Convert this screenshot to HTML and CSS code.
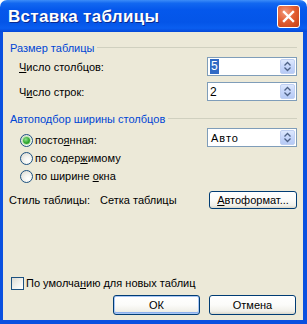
FILE: index.html
```html
<!DOCTYPE html>
<html lang="ru">
<head>
<meta charset="utf-8">
<title>Вставка таблицы</title>
<link rel="stylesheet" href="styles.css">
</head>
<body>
<div class="window">
  <div class="titlebar">
    <span class="title">Вставка таблицы</span>
    <span class="close">
      <svg width="13" height="13" viewBox="0 0 13 13"><path d="M2 2 L11 11 M11 2 L2 11" stroke="#fff" stroke-width="2.4" stroke-linecap="square"/></svg>
    </span>
  </div>
  <div class="frame">
    <div class="group-head"><span class="group-title">Размер таблицы</span><i class="rule"></i></div>
    <div class="field-row">
      <span class="lbl"><u>Ч</u>исло столбцов:</span>
      <div class="spin"><span class="val"><span class="sel">5</span></span><span class="spin-btn"><svg width="9" height="11" viewBox="0 0 9 11"><path d="M1.5 4.5 L4.5 1.5 L7.5 4.5 M1.5 6.5 L4.5 9.5 L7.5 6.5" fill="none" stroke="#4d6185" stroke-width="1.3"/></svg></span></div>
    </div>
    <div class="field-row second">
      <span class="lbl">Ч<u>и</u>сло строк:</span>
      <div class="spin"><span class="val">2</span><span class="spin-btn"><svg width="9" height="11" viewBox="0 0 9 11"><path d="M1.5 4.5 L4.5 1.5 L7.5 4.5 M1.5 6.5 L4.5 9.5 L7.5 6.5" fill="none" stroke="#4d6185" stroke-width="1.3"/></svg></span></div>
    </div>
    <div class="group-head head2"><span class="group-title">Автоподбор ширины столбцов</span><i class="rule"></i></div>
    <div class="auto-body">
      <div class="radios">
        <label class="radio-row"><span class="radio checked"><span class="dot"></span></span><span>посто<u>я</u>нная:</span></label>
        <label class="radio-row"><span class="radio"></span><span>по содер<u>ж</u>имому</span></label>
        <label class="radio-row"><span class="radio"></span><span>по ширине <u>о</u>кна</span></label>
      </div>
      <div class="spin combo"><span class="val wide">Авто</span><span class="spin-btn"><svg width="9" height="11" viewBox="0 0 9 11"><path d="M1.5 4.5 L4.5 1.5 L7.5 4.5 M1.5 6.5 L4.5 9.5 L7.5 6.5" fill="none" stroke="#4d6185" stroke-width="1.3"/></svg></span></div>
    </div>
    <div class="style-row">
      <span class="style-lbl">Стиль таблицы:</span>
      <span class="style-val">Сетка таблицы</span>
      <button class="btn auto-btn"><u>А</u>втоформат...</button>
    </div>
    <div class="bottom">
      <label class="check-row"><span class="check"></span><span>По умолча<u>н</u>ию для новых таблиц</span></label>
      <div class="buttons">
        <button class="btn default">ОК</button>
        <button class="btn">Отмена</button>
      </div>
    </div>
  </div>
</div>
</body>
</html>
```
FILE: styles.css
```css
* { box-sizing: border-box; }
html, body { margin: 0; padding: 0; background: #ffffff; }
body {
  font-family: "Liberation Sans", Arial, sans-serif;
  font-size: 11px;
  color: #000;
}
u { text-decoration: underline; text-underline-offset: 1px; }

.window {
  width: 307px;
  height: 324px;
  display: flex;
  flex-direction: column;
}

.titlebar {
  height: 32px;
  flex: none;
  display: flex;
  align-items: center;
  justify-content: space-between;
  padding: 0 7px 0 8px;
  border-radius: 7px 7px 0 0;
  background: linear-gradient(180deg, #3c8cf8 0%, #1268f0 10%, #0558ec 30%, #0455e8 70%, #0a5ef0 88%, #0448d8 100%);
}
.title {
  color: #fff;
  font-family: "Liberation Sans", Arial, sans-serif;
  font-weight: bold;
  font-size: 17px;
  letter-spacing: 0.3px;
  text-shadow: 1px 1px 0 #0a2a90;
  margin-top: 1px;
}
.close {
  width: 23px;
  height: 23px;
  border: 1px solid #fff;
  border-radius: 3px;
  background: radial-gradient(circle at 35% 30%, #f29a7c 0%, #e35f33 45%, #c63f14 100%);
  display: flex;
  align-items: center;
  justify-content: center;
  margin-top: 1px;
}

.frame {
  flex: 1;
  display: flex;
  flex-direction: column;
  background: #ece9d8;
  border-style: solid;
  border-color: #0a50e0;
  border-width: 0 4px 4px 3px;
  padding: 0 6px 5px 7px;
}

.group-head {
  display: flex;
  align-items: center;
  height: 14px;
  line-height: 14px;
  margin-top: 9px;
}
.group-head.head2 { margin-top: 11px; }
.group-title { color: #0046d5; white-space: nowrap; }
.rule {
  flex: 1;
  height: 1px;
  margin-left: 3px;
  margin-top: -1px;
  background: #d0d0bf;
}

.field-row {
  display: flex;
  align-items: center;
  justify-content: space-between;
  height: 19px;
  margin-top: 2px;
  padding-left: 9px;
}
.field-row.second { margin-top: 6px; }

.spin {
  width: 90px;
  height: 19px;
  border: 1px solid #7f9db9;
  background: #fff;
  display: flex;
  align-items: stretch;
  padding: 1px;
}
.val {
  flex: 1;
  display: flex;
  align-items: center;
  padding-left: 1px;
  font-size: 12px;
}
.val.wide { letter-spacing: 1px; padding-left: 2px; font-size: 11px; }
.sel {
  background: #316ac5;
  color: #fff;
  padding: 0 1px;
  line-height: 15px;
}
.spin-btn {
  width: 15px;
  border-radius: 2px;
  background: linear-gradient(180deg, #dde8fd 0%, #c6d6fa 50%, #b6caf5 100%);
  border: 1px solid #c0d0f2;
  display: flex;
  align-items: center;
  justify-content: center;
}

.auto-body {
  display: flex;
  justify-content: space-between;
  align-items: flex-start;
  margin-top: 2px;
}
.radios {
  display: flex;
  flex-direction: column;
  padding-top: 3px;
  padding-left: 10px;
}
.radio-row {
  display: flex;
  align-items: center;
  height: 18px;
}
.radio {
  width: 13px;
  height: 13px;
  border-radius: 50%;
  border: 1px solid #1c5180;
  background: radial-gradient(circle at 65% 70%, #ffffff 0%, #f3f3ef 40%, #d6d4cc 100%);
  margin-right: 2px;
  display: flex;
  align-items: center;
  justify-content: center;
}
.dot {
  width: 7px;
  height: 7px;
  border-radius: 50%;
  background: radial-gradient(circle at 40% 35%, #8ee08e 0%, #2fa82f 55%, #1b8a1b 100%);
  box-shadow: 0 0 0 1px #b8e6b0;
}

.style-row {
  display: flex;
  align-items: center;
  height: 18px;
  margin-top: 6px;
  margin-left: -1px;
}
.style-lbl { width: 91px; }
.style-val { flex: 1; }

.btn {
  font-family: "Liberation Sans", Arial, sans-serif;
  font-size: 11px;
  color: #000;
  border: 1px solid #003c74;
  border-radius: 3px;
  background: linear-gradient(180deg, #ffffff 0%, #fbfbf9 50%, #f0efe8 85%, #d8d5c9 100%);
  padding: 0;
  display: flex;
  align-items: center;
  justify-content: center;
}
.auto-btn { width: 88px; height: 18px; }

.bottom {
  margin-top: auto;
  display: flex;
  flex-direction: column;
}
.check-row {
  display: flex;
  align-items: center;
  height: 14px;
  padding-left: 1px;
}
.check {
  width: 13px;
  height: 13px;
  border: 1px solid #1c5180;
  background: linear-gradient(135deg, #dcdbd3 0%, #f4f4f0 60%, #ffffff 100%);
  margin-right: 2px;
}
.buttons {
  display: flex;
  justify-content: flex-end;
  gap: 9px;
  margin-top: 5px;
  margin-right: 1px;
}
.buttons .btn { width: 87px; height: 20px; }
.btn.default { box-shadow: inset 0 0 0 1px #a8c6f4, inset 0 -1px 0 1px #8cb0ee; }
```
